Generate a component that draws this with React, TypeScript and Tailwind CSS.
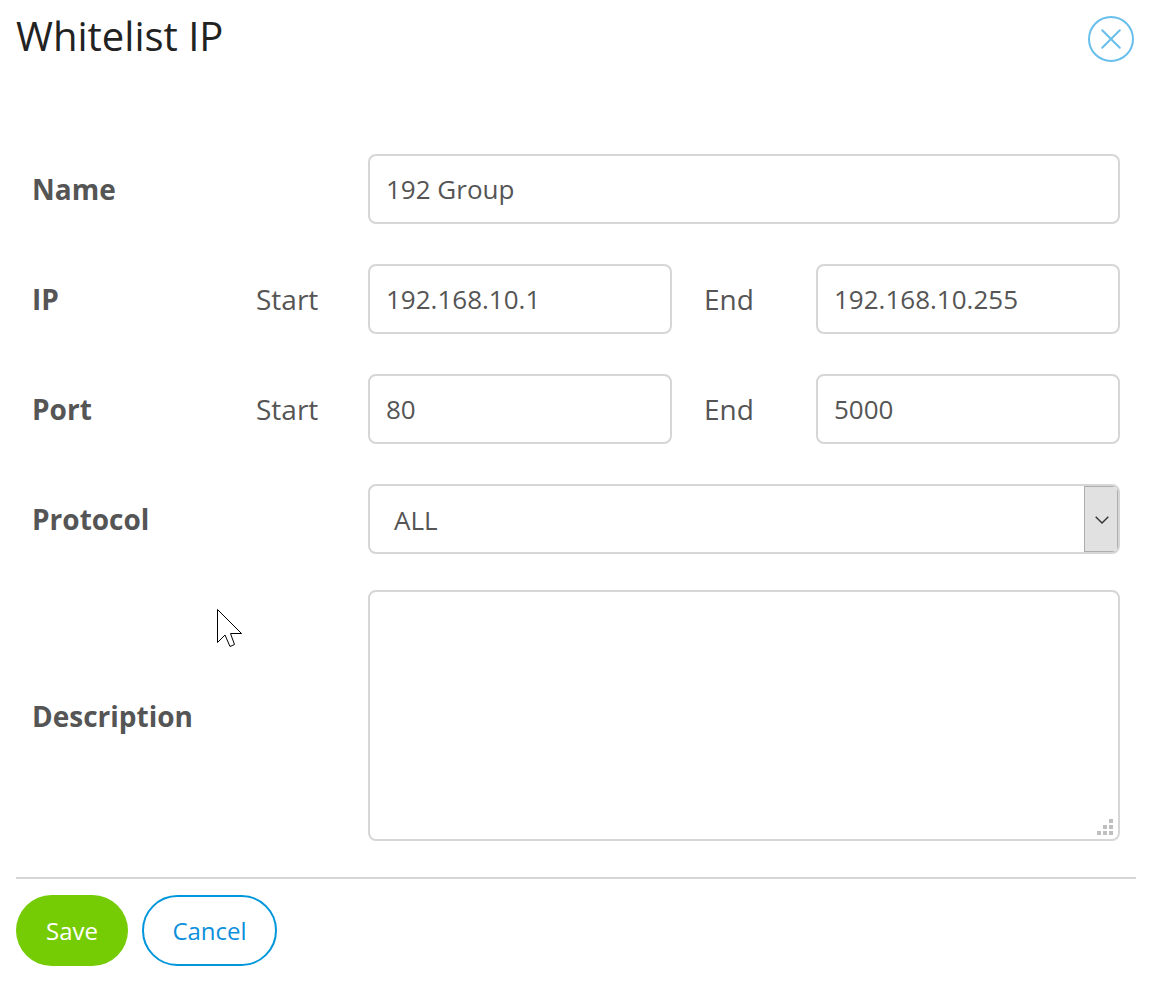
import React from 'react';

const field = "h-[70px] rounded-lg border-2 border-[#d6d6d6] bg-white px-4 text-[26px] text-[#555] outline-none";
const strong = "w-[224px] shrink-0 text-[28px] leading-[38px] font-bold text-[#555]";
const sub = "w-[112px] shrink-0 text-[28px] leading-[38px] text-[#555]";

function RangeRow({ label, start, end }: { label: string; start: string; end: string }) {
  return (
    <div className="flex h-[70px] items-center">
      <span className={strong}>{label}</span>
      <span className={sub}>Start</span>
      <input className={`${field} w-[304px]`} defaultValue={start} />
      <span className={`${sub} ml-8`}>End</span>
      <input className={`${field} w-[304px]`} defaultValue={end} />
    </div>
  );
}

export default function App() {
  return (
    <div className="relative flex h-[982px] w-[1152px] flex-col bg-white px-4 font-['Open_Sans',sans-serif]">
      <header className="flex h-[154px] items-start justify-between pr-[2px]">
        <h1 className="mt-[9px] text-[40px] leading-[54px] text-[#222]">Whitelist IP</h1>
        <button className="mt-4" aria-label="Close">
          <svg width="46" height="46" viewBox="0 0 46 46" fill="none" stroke="#69bfec" strokeWidth="2" strokeLinecap="round">
            <circle cx="23" cy="23" r="22" />
            <path d="M14.2 14.2L31.8 31.8M31.8 14.2L14.2 31.8" />
          </svg>
        </button>
      </header>
      <main className="flex flex-col gap-10 px-4">
        <div className="flex items-center">
          <span className={`${strong} mr-[112px]`}>Name</span>
          <input className={`${field} w-[752px]`} defaultValue="192 Group" />
        </div>
        <RangeRow label="IP" start="192.168.10.1" end="192.168.10.255" />
        <RangeRow label="Port" start="80" end="5000" />
        <div className="flex items-center">
          <span className={`${strong} mr-[112px]`}>Protocol</span>
          <div className="flex h-[70px] w-[752px] overflow-hidden rounded-lg border-2 border-[#d6d6d6]">
            <span className="flex-1 pl-6 text-[26px] leading-[68px] text-[#555]">ALL</span>
            <span className="flex w-[34px] items-center justify-center border border-[#adadad] bg-[#e1e1e1] pt-px pl-px">
              <svg width="14" height="8" viewBox="0 0 14 8" fill="none" stroke="#333" strokeWidth="1.4"><path d="M.7 .7L7 7L13.3 .7" /></svg>
            </span>
          </div>
        </div>
        <div className="-mt-1 flex items-center">
          <span className={`${strong} mr-[112px]`}>Description</span>
          <div className="flex h-[251px] w-[752px] items-end justify-end rounded-lg border-2 border-[#d6d6d6] pr-[5px] pb-1">
            <svg width="16" height="16" viewBox="0 0 16 16" fill="#bfbfbf"><path d="M12 0h4v4h-4zM6 6h4v4H6zM12 6h4v4h-4zM0 12h4v4H0zM6 12h4v4H6zM12 12h4v4h-4z" /></svg>
          </div>
        </div>
      </main>
      <footer className="mt-9 flex gap-[14px] border-t-2 border-[#d6d6d6] pt-4 text-[24px]">
        <button className="h-[71px] w-[112px] rounded-full bg-[#76cc04] text-white">Save</button>
        <button className="h-[71px] w-[135px] rounded-full border-2 border-[#0096dc] text-[#0d8fdc]">Cancel</button>
      </footer>
      <svg className="absolute top-[608px] left-[216px]" width="28" height="42" viewBox="0 0 28 42" fill="white" stroke="black" strokeWidth="1">
        <path d="M1.5 1.5V34.5L9 27L14 38.5L18.5 36.5L14.5 25.5H25.5Z" />
      </svg>
    </div>
  );
}
